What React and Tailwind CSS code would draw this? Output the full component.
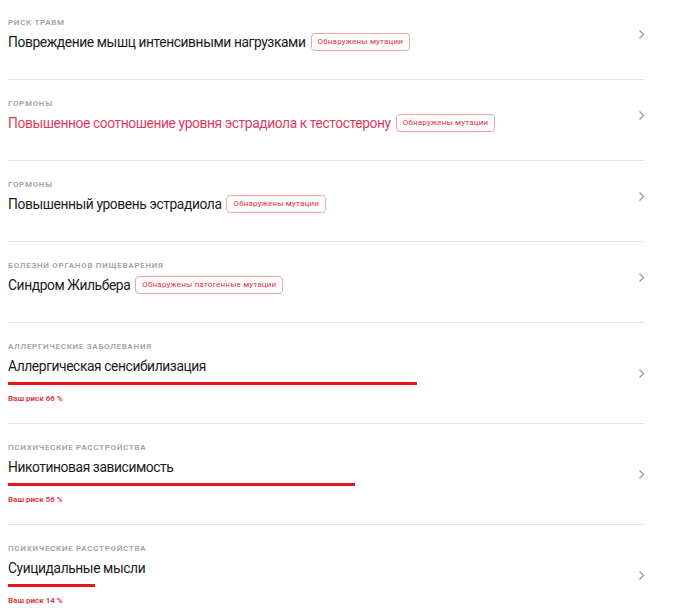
import React from 'react';

const items = [
  { category: 'Риск травм', title: 'Повреждение мышц интенсивными нагрузками', badge: 'Обнаружены мутации' },
  { category: 'Гормоны', title: 'Повышенное соотношение уровня эстрадиола к тестостерону', badge: 'Обнаружены мутации', highlight: true },
  { category: 'Гормоны', title: 'Повышенный уровень эстрадиола', badge: 'Обнаружены мутации' },
  { category: 'Болезни органов пищеварения', title: 'Синдром Жильбера', badge: 'Обнаружены патогенные мутации' },
  { category: 'Аллергические заболевания', title: 'Аллергическая сенсибилизация', risk: 66 },
  { category: 'Психические расстройства', title: 'Никотиновая зависимость', risk: 56 },
  { category: 'Психические расстройства', title: 'Суицидальные мысли', risk: 14 },
];

const Chevron = () => (
  <svg width="7" height="11" viewBox="0 0 7 11" fill="none" className="shrink-0">
    <path d="M1.5 1.5L5.5 5.5L1.5 9.5" stroke="#9a9a9a" strokeWidth="1.3" />
  </svg>
);

const RiskRow = ({ item }) => (
  <div className={`flex items-center border-b border-[#e6e6e6] pt-[18px] ${item.risk !== undefined ? 'pb-[18px]' : 'pb-[27px]'}`}>
    <div className="flex-1 min-w-0">
      <div className="text-[8px] leading-3 font-semibold uppercase tracking-[0.7px] text-[#a3a3a3]">
        {item.category}
      </div>
      <div className="mt-[3px] flex items-center gap-[5px]">
        <span className={`text-[13.8px] leading-5 tracking-[-0.4px] ${item.highlight ? 'text-[#dc3d5f]' : 'text-[#1b1b1b]'}`}>
          {item.title}
        </span>
        {item.badge && (
          <span className="h-[18px] flex items-center px-[6px] rounded-[4px] border border-[#f2a3a8] text-[8px] tracking-[0.2px] text-[#e2303b]">
            {item.badge}
          </span>
        )}
      </div>
      {item.risk !== undefined && (
        <>
          <div className="mt-[6px] h-[3px] w-[620px]">
            <div className="h-full bg-[#e8141c]" style={{ width: `${item.risk}%` }}></div>
          </div>
          <div className="mt-[8px] text-[8px] leading-3 font-semibold text-[#e2303b]">
            Ваш риск {item.risk} %
          </div>
        </>
      )}
    </div>
    <Chevron />
  </div>
);

const RiskList = () => {
  return (
    <div className="min-h-screen bg-white" style={{ fontFamily: 'Roboto, "Open Sans", sans-serif' }}>
      <div className="w-[637px] ml-2 -mt-[1px]">
        {items.map((item, i) => (
          <RiskRow key={i} item={item} />
        ))}
      </div>
    </div>
  );
};

export default RiskList;
